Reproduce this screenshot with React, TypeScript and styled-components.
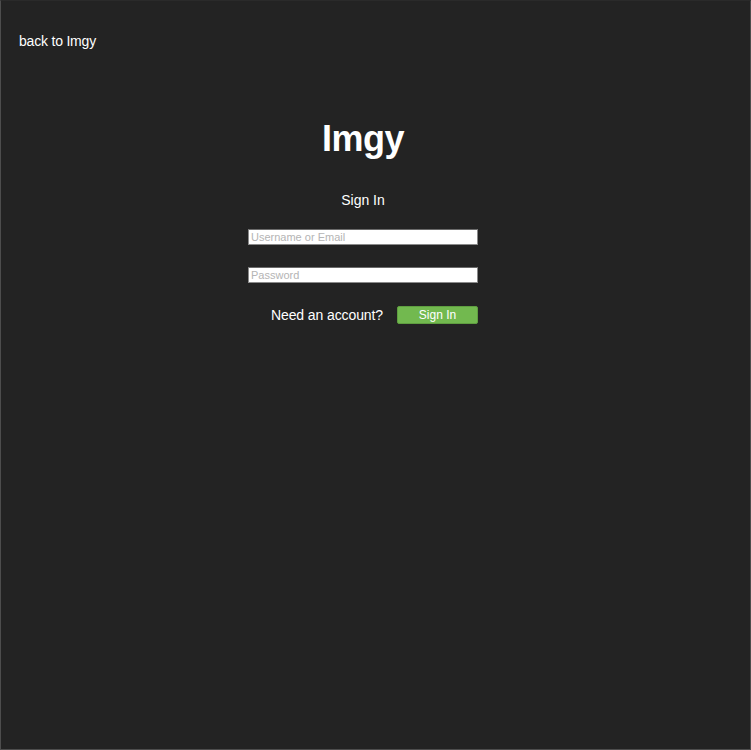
import React from "react";
import styled, { createGlobalStyle } from "styled-components";

const Global = createGlobalStyle`
  html, body { margin: 0; padding: 0; background: #232323; }
  body { font-family: "Liberation Sans", Arial, Helvetica, sans-serif; color: #fff; }
  * { box-sizing: border-box; }
`;

const Page = styled.div`
  width: 751px;
  height: 750px;
  background: #232323;
  border: 1px solid #4d4d4d;
  border-top-color: #2a2a2a;
`;

const TopBar = styled.div`
  padding: 31px 0 0 18px;
  height: 117px;
`;

const BackLink = styled.a`
  color: #fff;
  font-size: 14px;
  text-decoration: none;
  letter-spacing: -0.2px;
`;

const Main = styled.div`
  width: 724px;
  display: flex;
  flex-direction: column;
  align-items: center;
`;

const Title = styled.h1`
  margin: 0;
  font-size: 36px;
  font-weight: bold;
  line-height: 41px;
  letter-spacing: -0.5px;
`;

const Subtitle = styled.div`
  margin-top: 33px;
  font-size: 14px;
  line-height: 16px;
`;

const Form = styled.form`
  margin-top: 21px;
  width: 230px;
  display: flex;
  flex-direction: column;
  gap: 22px;
`;

const Input = styled.input`
  width: 230px;
  height: 16px;
  padding: 0 2px;
  border: 1px solid #8a8a8a;
  border-top-color: #6a6a6a;
  background: #fff;
  font-family: "Liberation Sans", Arial, sans-serif;
  font-size: 11px;
  outline: none;
  &::placeholder { color: #b4b4b4; }
`;

const Actions = styled.div`
  margin-top: 1px;
  display: flex;
  justify-content: flex-end;
  align-items: center;
  gap: 14px;
`;

const AccountText = styled.span`
  font-size: 14px;
  letter-spacing: -0.1px;
`;

const Button = styled.button`
  width: 81px;
  height: 18px;
  background: #72b94f;
  border: 1px solid #5f9e40;
  border-radius: 2px;
  color: #fff;
  font-family: "Liberation Sans", Arial, sans-serif;
  font-size: 12px;
  padding: 0;
  line-height: 14px;
`;

export default function App() {
  return (
    <>
      <Global />
      <Page>
        <TopBar>
          <BackLink href="#">back to Imgy</BackLink>
        </TopBar>
        <Main>
          <Title>Imgy</Title>
          <Subtitle>Sign In</Subtitle>
          <Form onSubmit={(e) => e.preventDefault()}>
            <Input placeholder="Username or Email" />
            <Input type="password" placeholder="Password" />
            <Actions>
              <AccountText>Need an account?</AccountText>
              <Button type="submit">Sign In</Button>
            </Actions>
          </Form>
        </Main>
      </Page>
    </>
  );
}
